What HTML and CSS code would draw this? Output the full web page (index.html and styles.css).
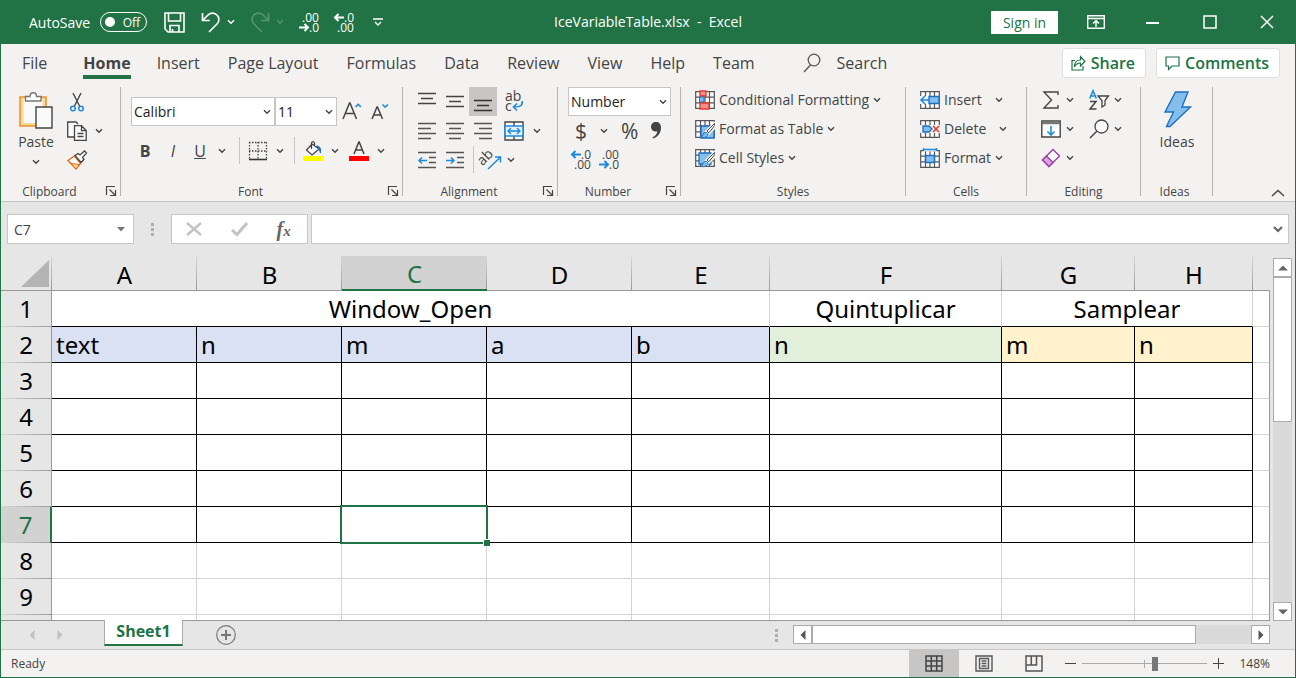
FILE: index.html
```html
<!DOCTYPE html>
<html lang="en">

<head>
    <meta charset="utf-8">
    <title>IceVariableTable.xlsx - Excel</title>

    <link rel="stylesheet" href="styles.css">
</head>

<body>

    <!-- Shared icons -->
    <svg class="defs" width="0" height="0">
        <symbol id="chev" viewBox="0 0 8 6"><path d="M1 1.2l3 3 3-3" fill="none" stroke="currentColor" stroke-width="1.4" /></symbol>
        <symbol id="launcher" viewBox="0 0 12 12"><path d="M1.5 10V1.5H10M4.500 4.500l5.500 5.500M10.500 5v5.500H5" fill="none" stroke="#444" stroke-width="1.200" /></symbol>
        <symbol id="grid" viewBox="0 0 20 18"><path d="M.7.7h18.600v16.600H.7zM.7 6.200h18.600M.7 11.800h18.600M5.500.7v16.600M10 .7v16.600M14.500.7v16.600" fill="#fff" stroke="#555" stroke-width="1.200" /></symbol>
        <symbol id="brush" viewBox="0 0 20 20">
            <path d="M20 4L11.500 12.500l2 2L20 8z" fill="#f3f2f1" stroke="#f3f2f1" stroke-width="3" />
            <path d="M19.500 4.500l-7.500 7.500 1.800 1.800 6-7.300z" fill="#fff" stroke="#444" />
            <path d="M6 18.500c2-.5 1.500-5 4.500-5 2 0 3 1.500 2 3-1.200 2-4 2.500-6.500 2z" fill="#83beec" stroke="#1e6fbf" />
        </symbol>
    </svg>

    <div class="app">

        <header class="titlebar">
            <div class="quick">
                <label class="autosave">AutoSave
                    <span class="switch"><input type="checkbox"><span>Off</span></span>
                </label>
                <button class="save" aria-label="Save"><svg width="21" height="21" viewBox="0 0 21 21"><path d="M1 1h19v19H4l-3-3zM4.500 1v8h12V1M6 20v-6.500h9V20M8.500 17v3" fill="none" stroke="#fff" stroke-width="1.600" /></svg></button>
                <button class="undo" aria-label="Undo"><svg width="20" height="21" viewBox="0 0 20 21"><path d="M1.500 1v7.500H9M1.500 8.500L7 3c3-3 7-2 9 0s3 6 0 9l-8 8" fill="none" stroke="currentColor" stroke-width="1.700" /></svg><svg class="chev"><use href="#chev" /></svg></button>
                <button class="redo" aria-label="Redo"><svg width="20" height="21" viewBox="0 0 20 21"><path d="M18.500 1v7.500H11M18.500 8.500L13 3c-3-3-7-2-9 0s-3 6 0 9l8 8" fill="none" stroke="currentColor" stroke-width="1.700" /></svg><svg class="chev"><use href="#chev" /></svg></button>
                <button class="dec" aria-label="Decrease Decimal"><svg width="21" height="21" viewBox="0 0 21 21"><path class="arrow" d="M0 15.500h9M5.500 12L9 15.500 5.500 19" /><text x="3" y="10">.00</text><text x="10" y="20">.0</text></svg></button>
                <button class="dec" aria-label="Increase Decimal"><svg width="21" height="21" viewBox="0 0 21 21"><path class="arrow" d="M10 5.500H1M4.500 2L1 5.500 4.500 9" /><text x="10" y="10">.0</text><text x="3" y="20">.00</text></svg></button>
                <button class="customize" aria-label="Customize toolbar"><svg width="10" height="9" viewBox="0 0 10 9"><path d="M0 1h10M2 4l3 3 3-3" fill="none" stroke="#fff" stroke-width="1.400" /></svg></button>
            </div>
            <div class="doc-title">IceVariableTable.xlsx&nbsp; -&nbsp; Excel</div>
            <div class="window-controls">
                <button class="sign-in">Sign in</button>
                <button class="win" aria-label="Ribbon display"><svg width="18" height="14" viewBox="0 0 18 14"><path d="M.7.7h16.600v12.600H.7zM1 3.500h16M9 12V6M6 8.500l3-3 3 3" fill="none" stroke="#fff" stroke-width="1.400" /></svg></button>
                <button class="win" aria-label="Minimize"><svg width="14" height="14"><path d="M0 8h13" stroke="#fff" stroke-width="2" /></svg></button>
                <button class="win" aria-label="Maximize"><svg width="14" height="14"><path d="M1 1h12v12H1z" fill="none" stroke="#fff" stroke-width="1.500" /></svg></button>
                <button class="win" aria-label="Close"><svg width="14" height="14"><path d="M1 1l12 12M13 1L1 13" stroke="#fff" stroke-width="1.500" /></svg></button>
            </div>
        </header>

        <nav class="tabs">
            <a class="file" href="#">File</a>
            <a class="active" href="#">Home</a>
            <a href="#">Insert</a>
            <a href="#">Page Layout</a>
            <a href="#">Formulas</a>
            <a href="#">Data</a>
            <a href="#">Review</a>
            <a href="#">View</a>
            <a href="#">Help</a>
            <a href="#">Team</a>
            <button class="search"><svg width="18" height="20" viewBox="0 0 18 20"><circle cx="11" cy="7" r="5.800" fill="none" stroke="#555" stroke-width="1.300" /><path d="M7.500 12L1 19" stroke="#555" stroke-width="1.300" /></svg>Search</button>
            <div class="share-buttons">
                <button><svg width="15" height="16" viewBox="0 0 15 16"><path d="M4 5.500H1V15h11v-4M3.500 12c0-5 2-7 6-7V1.500L14 6.500 9.500 11V8c-3 0-4.500 1-6 4z" fill="none" stroke="#217346" stroke-width="1.200" /></svg>Share</button>
                <button><svg width="15" height="15" viewBox="0 0 15 15"><path d="M1 1h13v9H7l-3.500 3.500V10H1z" fill="none" stroke="#217346" stroke-width="1.200" /></svg>Comments</button>
            </div>
        </nav>

        <!-- Ribbon -->
        <section class="ribbon">

            <div class="group clipboard">
                <div class="body">
                    <button class="big"><svg width="36" height="39" viewBox="0 0 36 39">
                            <path d="M2 6h26v29H2z" fill="#fbd98f" stroke="#e8912d" stroke-width="1.500" /><path d="M5.500 8h19v24h-19z" fill="#fafafa" />
                            <path d="M7.500 10V5.500H12c0-5 6.500-5 6.500 0H23V10z" fill="#fff" stroke="#777" stroke-width="1.400" />
                            <path d="M18 16h16v21H18z" fill="#fafafa" stroke="#444" stroke-width="1.400" />
                        </svg>Paste<svg class="chev"><use href="#chev" /></svg></button>
                    <div class="rows">
                        <button aria-label="Cut"><svg width="20" height="20" viewBox="0 0 20 20"><path d="M6 1l6.500 13M14 1L7.500 14" fill="none" stroke="#444" stroke-width="1.400" /><circle cx="6" cy="16.500" r="2.300" fill="none" stroke="#1e8bd8" stroke-width="1.500" /><circle cx="14" cy="16.500" r="2.300" fill="none" stroke="#1e8bd8" stroke-width="1.500" /></svg></button>
                        <button aria-label="Copy"><svg width="20" height="20" viewBox="0 0 20 20"><path d="M7 16H.7V1H9l2 2" fill="#fafafa" stroke="#444" stroke-width="1.300" /><path d="M7.500 4.700h7l4.700 4.800v9.800H7.500zM14.500 4.700v5h4.700M10.500 12.500h6M10.500 15.500h6" fill="#fafafa" stroke="#444" stroke-width="1.300" /></svg><svg class="chev"><use href="#chev" /></svg></button>
                        <button aria-label="Format Painter"><svg width="20" height="20" viewBox="0 0 20 20"><path d="M1 10.500L7.500 6l6 7.500L9 19z" fill="#fff" stroke="#e8641b" stroke-width="1.300" /><path d="M4 13.500l8.500 1L9 19z" fill="#fbd98f" stroke="#e8641b" /><path d="M8 5.500l3-2 2 1.500 4.500-4 2 2-4 4.500 1.500 2-3 3z" fill="#fff" stroke="#444" stroke-width="1.300" /></svg></button>
                    </div>
                </div>
                <div class="label">Clipboard</div>
                <button class="launcher" aria-label="Clipboard settings"><svg width="12" height="12"><use href="#launcher" /></svg></button>
            </div>

            <div class="group font">
                <div class="body">
                    <div class="font-row">
                        <span class="combo font-name"><select aria-label="Font"><option>Calibri</option></select><svg class="chev"><use href="#chev" /></svg></span>
                        <span class="combo font-size"><select aria-label="Font size"><option>11</option></select><svg class="chev"><use href="#chev" /></svg></span>
                        <button class="grow" aria-label="Increase Font Size"><svg width="20" height="20" viewBox="0 0 20 20"><path d="M1 17L7.500 1h.5L14.500 17M3.500 11.500H12" fill="none" stroke="#444" stroke-width="1.500" /><path d="M13.500 5l2.700-2.700L19 5" fill="none" stroke="#1e8bd8" stroke-width="1.600" /></svg></button>
                        <button aria-label="Decrease Font Size"><svg width="20" height="20" viewBox="0 0 20 20"><path d="M1 17L6 5h.5L11.500 17M3 13h7" fill="none" stroke="#444" stroke-width="1.500" /><path d="M11.500 2.500l2.700 2.700L17 2.500" fill="none" stroke="#1e8bd8" stroke-width="1.600" /></svg></button>
                    </div>
                    <div class="font-row second">
                        <button class="letter"><b>B</b></button>
                        <button class="letter"><i>I</i></button>
                        <button class="letter under"><u>U</u><svg class="chev"><use href="#chev" /></svg></button>
                        <span class="bar"></span>
                        <button aria-label="Borders"><svg width="20" height="20" viewBox="0 0 20 20"><path d="M1.500 1v17M1 1.500h18M18.500 1v17M10 1v17M1 10h18" fill="none" stroke="#444" stroke-width="1.300" stroke-dasharray="1.500 1.500" /><path d="M1 18.500h18" stroke="#333" stroke-width="1.600" /></svg><svg class="chev"><use href="#chev" /></svg></button>
                        <span class="bar"></span>
                        <button class="fill" aria-label="Fill Color"><svg width="20" height="20" viewBox="0 0 20 20"><path d="M9 3l7 5-7 6-5.500-5zM8.500 8V2.500c0-2.500 3-2.500 3 0V6" fill="#fff" stroke="#444" stroke-width="1.300" /><path d="M13.500 5c3.500 0 4.500 2.500 4 7-.8-3-1.500-4.500-4-7z" fill="#1e6fbf" stroke="#1e6fbf" /><path d="M0 15h20v5H0z" fill="#ff0" /></svg><svg class="chev"><use href="#chev" /></svg></button>
                        <button aria-label="Font Color"><svg width="20" height="20" viewBox="0 0 20 20"><path d="M5 13L9.800 1h.4L15 13M6.500 9h7" fill="none" stroke="#444" stroke-width="1.500" /><path d="M0 15h20v5H0z" fill="red" /></svg><svg class="chev"><use href="#chev" /></svg></button>
                    </div>
                </div>
                <div class="label">Font</div>
                <button class="launcher" aria-label="Font settings"><svg width="12" height="12"><use href="#launcher" /></svg></button>
            </div>

            <div class="group alignment">
                <div class="body rows">
                    <div class="row">
                        <button class="al" aria-label="Top Align"><svg width="18" height="18"><path d="M0 .5h18M3 5.500h12M0 10.500h18" stroke="#444" stroke-width="1.400" /></svg></button>
                        <button class="al" aria-label="Middle Align"><svg width="18" height="18"><path d="M0 3.500h18M3 8.500h12M0 13.500h18" stroke="#444" stroke-width="1.400" /></svg></button>
                        <button class="al pressed" aria-label="Bottom Align"><svg width="18" height="18"><path d="M0 7.500h18M3 12.500h12M0 17.500h18" stroke="#333" stroke-width="1.400" /></svg></button>
                        <button class="wrap" aria-label="Wrap Text"><svg width="20" height="20" viewBox="0 0 20 20"><text x="1" y="9">ab</text><text x="1" y="19">c</text><path d="M18 9c1 4-1 6-8 6M13 11.500L9.500 15l3.500 3.500" fill="none" stroke="#1e8bd8" stroke-width="1.600" /></svg></button>
                    </div>
                    <div class="row">
                        <button class="al" aria-label="Align Left"><svg width="18" height="18"><path d="M0 1.500h18M0 6.500h13M0 11.500h18M0 16.500h13" stroke="#555" stroke-width="1.400" /></svg></button>
                        <button class="al" aria-label="Center"><svg width="18" height="18"><path d="M0 1.500h18M3 6.500h12M0 11.500h18M3 16.500h12" stroke="#555" stroke-width="1.400" /></svg></button>
                        <button class="al" aria-label="Align Right"><svg width="18" height="18"><path d="M0 1.500h18M5 6.500h13M0 11.500h18M5 16.500h13" stroke="#555" stroke-width="1.400" /></svg></button>
                        <button class="wrap" aria-label="Merge and Center"><svg width="20" height="20" viewBox="0 0 20 20"><path d="M1 1h18v18H1zM10 1v4M10 15v4" fill="#fff" stroke="#444" stroke-width="1.400" /><path d="M1 5h18v10H1z" fill="#e5f1fb" stroke="#1e8bd8" stroke-width="1.500" /><path d="M4 10h12M7 7l-3 3 3 3M13 7l3 3-3 3" fill="none" stroke="#1e8bd8" stroke-width="1.400" /></svg><svg class="chev"><use href="#chev" /></svg></button>
                    </div>
                    <div class="row">
                        <button class="al" aria-label="Decrease Indent"><svg width="18" height="18"><path d="M0 1.500h18M11 6.500h7M11 11.500h7M0 16.500h18" stroke="#555" stroke-width="1.400" /><path d="M9 9.500H1M4 6.500l-3 3 3 3" fill="none" stroke="#1e8bd8" stroke-width="1.500" /></svg></button>
                        <button class="al" aria-label="Increase Indent"><svg width="18" height="18"><path d="M0 1.500h18M11 6.500h7M11 11.500h7M0 16.500h18" stroke="#555" stroke-width="1.400" /><path d="M0 9.500h8M5 6.500l3 3-3 3" fill="none" stroke="#1e8bd8" stroke-width="1.500" /></svg></button>
                        <span class="bar"></span>
                        <button class="orient" aria-label="Orientation"><svg width="20" height="20" viewBox="0 0 20 20"><text x="-2" y="12" transform="rotate(-45 5 10)">ab</text><path d="M7 19L19 7.500M14 7h5.500v5.500" fill="none" stroke="#1e8bd8" stroke-width="1.500" /></svg><svg class="chev"><use href="#chev" /></svg></button>
                    </div>
                </div>
                <div class="label">Alignment</div>
                <button class="launcher" aria-label="Alignment settings"><svg width="12" height="12"><use href="#launcher" /></svg></button>
            </div>

            <div class="group number">
                <div class="body rows">
                    <span class="combo format"><select aria-label="Number format"><option>Number</option></select><svg class="chev"><use href="#chev" /></svg></span>
                    <div class="row symbols">
                        <button>$<svg class="chev"><use href="#chev" /></svg></button>
                        <button>%</button>
                        <button aria-label="Comma Style"><svg width="10" height="17" viewBox="0 0 10 17"><path d="M5 0c3 0 5 2 5 5.500C10 11 7 15 2 16.500l-.5-1.200C4.500 14 6 12 6.300 9.300 3 10.300 0 8.300 0 5c0-3 2-5 5-5z" fill="#444" /></svg></button>
                    </div>
                    <div class="row decimals">
                        <button class="dec" aria-label="Increase Decimal"><svg width="21" height="21" viewBox="0 0 21 21"><path class="arrow" d="M10 5.500H1M4.500 2L1 5.500 4.500 9" /><text x="10" y="10">.0</text><text x="3" y="20">.00</text></svg></button>
                        <button class="dec" aria-label="Decrease Decimal"><svg width="21" height="21" viewBox="0 0 21 21"><path class="arrow" d="M0 15.500h9M5.500 12L9 15.500 5.500 19" /><text x="3" y="10">.00</text><text x="10" y="20">.0</text></svg></button>
                    </div>
                </div>
                <div class="label">Number</div>
                <button class="launcher" aria-label="Number settings"><svg width="12" height="12"><use href="#launcher" /></svg></button>
            </div>

            <div class="group styles">
                <div class="body rows">
                    <button><svg width="20" height="20" viewBox="0 0 20 20"><use href="#grid" y="1" width="20" height="18" /><path d="M5 1h6v5H5zM5 13h9v6H5z" fill="#ff8c8c" stroke="#e03c31" stroke-width="1.300" /><path d="M4.500 7H9v5H4.500z" fill="#83beec" stroke="#1e6fbf" /></svg>Conditional Formatting<svg class="chev"><use href="#chev" /></svg></button>
                    <button><svg width="20" height="20" viewBox="0 0 20 20"><use href="#grid" y="1" width="20" height="18" /><path d="M6 7h13v12H6z" fill="#83beec" stroke="#1e6fbf" stroke-width="1.300" /><use href="#brush" width="20" height="20" /></svg>Format as Table<svg class="chev"><use href="#chev" /></svg></button>
                    <button><svg width="20" height="20" viewBox="0 0 20 20"><use href="#grid" y="1" width="20" height="18" /><path d="M4 5h12v11H4z" fill="#83beec" stroke="#1e6fbf" stroke-width="1.300" /><use href="#brush" width="20" height="20" /></svg>Cell Styles<svg class="chev"><use href="#chev" /></svg></button>
                </div>
                <div class="label">Styles</div>
            </div>

            <div class="group cells">
                <div class="body rows">
                    <button class="wide"><svg width="20" height="20" viewBox="0 0 20 20"><use href="#grid" y="1" width="20" height="18" /><path d="M0 6h10v8H0z" fill="#f3f2f1" /><path d="M9 6.500h10v7H9z" fill="#83beec" stroke="#1e6fbf" stroke-width="1.300" /><path d="M10 10H1M5 6l-4 4 4 4" fill="none" stroke="#1e8bd8" stroke-width="1.500" /></svg>Insert<svg class="chev"><use href="#chev" /></svg></button>
                    <button class="wide"><svg width="20" height="20" viewBox="0 0 20 20"><use href="#grid" y="1" width="20" height="18" /><path d="M0 6h20v8H0z" fill="#f3f2f1" /><path d="M3 7h6l3 3-3 3H3z" fill="#83beec" stroke="#1e6fbf" stroke-width="1.300" /><path d="M13 7l6 6M19 7l-6 6" stroke="#e03c31" stroke-width="1.600" /></svg>Delete<svg class="chev"><use href="#chev" /></svg></button>
                    <button><svg width="20" height="20" viewBox="0 0 20 20"><use href="#grid" y="2" width="20" height="18" /><path d="M5.500 7.500h9v7h-9z" fill="#83beec" stroke="#1e6fbf" stroke-width="1.500" /><path d="M3 0h14v3.500H3z" fill="#f3f2f1" /><path d="M3.500 0v3M16.500 0v3M3.500 1.500h13" stroke="#1e8bd8" stroke-width="1.400" /></svg>Format<svg class="chev"><use href="#chev" /></svg></button>
                </div>
                <div class="label">Cells</div>
            </div>

            <div class="group editing">
                <div class="body rows">
                    <div class="row">
                        <button aria-label="AutoSum"><svg width="20" height="20" viewBox="0 0 20 20"><path d="M17 5V2H3l7.500 8L3 18h14v-3" fill="none" stroke="#444" stroke-width="1.400" /></svg><svg class="chev"><use href="#chev" /></svg></button>
                        <button aria-label="Sort and Filter"><svg width="20" height="20" viewBox="0 0 20 20"><path d="M.7 8.500L4 .8l3.300 7.700M2 6h4" fill="none" stroke="#1e8bd8" stroke-width="1.600" /><path d="M1 11.500h6L1 19h6.500" fill="none" stroke="#444" stroke-width="1.500" /><path d="M9 6h10.500L16 10.500V15l-3 2v-6.500z" fill="#fff" stroke="#444" stroke-width="1.300" /></svg><svg class="chev"><use href="#chev" /></svg></button>
                    </div>
                    <div class="row">
                        <button aria-label="Fill"><svg width="20" height="20" viewBox="0 0 20 20"><path d="M.8 2h18.400v16H.8z" fill="#fff" stroke="#444" stroke-width="1.400" /><path d="M1 4h18" stroke="#777" stroke-width="2.500" /><path d="M10 7v9M6.500 12.500L10 16l3.500-3.500" fill="none" stroke="#1e8bd8" stroke-width="1.600" /></svg><svg class="chev"><use href="#chev" /></svg></button>
                        <button aria-label="Find and Select"><svg width="20" height="20" viewBox="0 0 20 20"><circle cx="12.500" cy="7.500" r="6.500" fill="#fafafa" stroke="#444" stroke-width="1.300" /><path d="M8 12L1 19" stroke="#444" stroke-width="1.400" /></svg><svg class="chev"><use href="#chev" /></svg></button>
                    </div>
                    <div class="row">
                        <button aria-label="Clear"><svg width="20" height="20" viewBox="0 0 20 20"><path d="M12 1.500L18.500 8 8 18.500 1.500 12z" fill="#fff" stroke="#9b3fa5" stroke-width="1.400" /><path d="M5.500 8L12 14.500l-4 4L1.500 12z" fill="#d8a3df" stroke="#9b3fa5" stroke-width="1.400" /></svg><svg class="chev"><use href="#chev" /></svg></button>
                    </div>
                </div>
                <div class="label">Editing</div>
            </div>

            <div class="group ideas">
                <div class="body">
                    <button class="big"><svg width="30" height="39" viewBox="0 0 30 39"><path d="M13.500 1H26l-6 15h8.500L8 35.500H4.500L11.500 21H3z" fill="#83beec" stroke="#1e6fbf" stroke-width="1.400" /></svg>Ideas</button>
                </div>
                <div class="label">Ideas</div>
            </div>

            <button class="collapse" aria-label="Collapse ribbon"><svg width="14" height="8"><path d="M1 7l6-5.500L13 7" fill="none" stroke="#444" stroke-width="1.400" /></svg></button>
        </section>

        <!-- Formula bar -->
        <section class="formula-bar">
            <div class="name-box"><input type="text" value="C7" aria-label="Name box"><button aria-label="Names"><svg width="8" height="5"><path d="M0 0h8L4 4.500z" fill="#777" /></svg></button></div>
            <span class="dots"></span>
            <div class="fx">
                <button aria-label="Cancel"><svg width="16" height="14"><path d="M1 1l14 12M15 1L1 13" stroke="#c3c3c3" stroke-width="2.400" /></svg></button>
                <button aria-label="Enter"><svg width="17" height="14"><path d="M1 8l5 4.500L16 1" fill="none" stroke="#c3c3c3" stroke-width="3" /></svg></button>
                <button class="fx-letter" aria-label="Insert function"><i>f</i><i class="x">x</i></button>
            </div>
            <div class="formula"><input type="text" aria-label="Formula"><button aria-label="Expand"><svg width="10" height="7"><path d="M1 1l4 4 4-4" fill="none" stroke="#666" stroke-width="2.200" /></svg></button></div>
        </section>

        <!-- Sheet -->
        <main class="sheet-area">
            <div class="sheet">
                <table>
                    <colgroup>
                        <col class="col-head"><col class="col-a"><col class="col-a"><col class="col-a"><col class="col-a"><col class="col-e"><col class="col-f"><col class="col-g"><col class="col-h"><col>
                    </colgroup>
                    <thead>
                        <tr>
                            <th class="corner"></th>
                            <th>A</th><th>B</th><th class="current">C</th><th>D</th><th>E</th><th>F</th><th>G</th><th>H</th><th class="rest"></th>
                        </tr>
                    </thead>
                    <tbody>
                        <tr class="titles">
                            <th>1</th>
                            <td colspan="5">Window_Open</td><td>Quintuplicar</td><td colspan="2">Samplear</td><td></td>
                        </tr>
                        <tr class="boxed">
                            <th>2</th>
                            <td class="blue">text</td><td class="blue">n</td><td class="blue">m</td><td class="blue">a</td><td class="blue">b</td>
                            <td class="green">n</td><td class="yellow">m</td><td class="yellow">n</td><td></td>
                        </tr>
                        <tr class="boxed"><th>3</th><td></td><td></td><td></td><td></td><td></td><td></td><td></td><td></td><td></td></tr>
                        <tr class="boxed"><th>4</th><td></td><td></td><td></td><td></td><td></td><td></td><td></td><td></td><td></td></tr>
                        <tr class="boxed"><th>5</th><td></td><td></td><td></td><td></td><td></td><td></td><td></td><td></td><td></td></tr>
                        <tr class="boxed"><th>6</th><td></td><td></td><td></td><td></td><td></td><td></td><td></td><td></td><td></td></tr>
                        <tr class="boxed"><th class="current">7</th><td></td><td></td><td class="selected"></td><td></td><td></td><td></td><td></td><td></td><td></td></tr>
                        <tr><th>8</th><td></td><td></td><td></td><td></td><td></td><td></td><td></td><td></td><td></td></tr>
                        <tr><th>9</th><td></td><td></td><td></td><td></td><td></td><td></td><td></td><td></td><td></td></tr>
                        <tr><th></th><td></td><td></td><td></td><td></td><td></td><td></td><td></td><td></td><td></td></tr>
                    </tbody>
                </table>
            </div>
            <div class="vscroll">
                <button aria-label="Scroll up"><svg width="10" height="6"><path d="M0 5.500h10L5 .5z" fill="#666" /></svg></button>
                <div class="thumb"></div>
                <button class="end" aria-label="Scroll down"><svg width="10" height="6"><path d="M0 .5h10L5 5.500z" fill="#666" /></svg></button>
            </div>
        </main>

        <section class="sheet-tabs">
            <button class="step" aria-label="Previous sheet"><svg width="6" height="10"><path d="M5.500 0v10L.5 5z" fill="#c0c0c0" /></svg></button>
            <button class="step" aria-label="Next sheet"><svg width="6" height="10"><path d="M.5 0v10l5-5z" fill="#c0c0c0" /></svg></button>
            <a class="sheet-tab" href="#">Sheet1</a>
            <button class="new-sheet" aria-label="New sheet"><svg width="20" height="20"><circle cx="10" cy="10" r="9.300" fill="none" stroke="#777" stroke-width="1.200" /><path d="M10 5v10M5 10h10" stroke="#777" stroke-width="2" /></svg></button>
            <span class="dots"></span>
            <div class="hscroll">
                <button aria-label="Scroll left"><svg width="6" height="10"><path d="M5.500 0v10L.5 5z" fill="#555" /></svg></button>
                <div class="thumb"></div>
                <button class="end" aria-label="Scroll right"><svg width="6" height="10"><path d="M.5 0v10l5-5z" fill="#555" /></svg></button>
            </div>
        </section>

        <footer class="status">
            <span class="ready">Ready</span>
            <button class="view on" aria-label="Normal"><svg width="18" height="17" viewBox="0 0 18 17"><path d="M1 1h16v15H1zM1 6h16M1 11h16M6.300 1v15M11.700 1v15" fill="none" stroke="#444" stroke-width="1.500" /></svg></button>
            <button class="view" aria-label="Page Layout"><svg width="18" height="17" viewBox="0 0 18 17"><path d="M1 1h16v15H1zM4.500 3.500h9v10h-9zM6.500 6h5M6.500 8.500h5M6.500 11h5" fill="none" stroke="#555" stroke-width="1.400" /></svg></button>
            <button class="view" aria-label="Page Break Preview"><svg width="18" height="17" viewBox="0 0 18 17"><path d="M1 1h16v15H1zM1 10h10.500V1M6.300 1v9" fill="none" stroke="#555" stroke-width="1.500" /></svg></button>
            <button class="zoom" aria-label="Zoom out"><svg width="11" height="11"><path d="M0 5.500h11" stroke="#444" /></svg></button>
            <input class="zoom-range" type="range" min="0" max="100" value="59" aria-label="Zoom">
            <button class="zoom" aria-label="Zoom in"><svg width="11" height="11"><path d="M0 5.500h11M5.500 0v11" stroke="#444" /></svg></button>
            <span class="percent">148%</span>
        </footer>

    </div>

</body>

</html>
```

FILE: styles.css
```css
* {
    box-sizing: border-box;
}

body {
    margin: 0;
    font-family: "Open Sans", "Noto Sans", sans-serif;
    font-size: 14px;
    color: #444;
}

button {
    display: flex;
    align-items: center;
    flex: none;
    margin: 0;
    padding: 0;
    border: 0;
    background: none;
    font: inherit;
    color: inherit;
    white-space: nowrap;
}

a {
    color: inherit;
    text-decoration: none;
}

svg {
    display: block;
    flex: none;
    overflow: visible;
}

svg text {
    font-size: 12px;
    fill: currentColor;
}

.defs {
    position: absolute;
}

.chev {
    width: 8px;
    height: 6px;
}

.app {
    display: flex;
    flex-direction: column;
    height: 100vh;
    border: 1px solid #217346;
    border-top: 0;
    background: #f3f2f1;
}

/* Title bar */

.titlebar {
    display: grid;
    grid-template-columns: 1fr auto 1fr;
    align-items: center;
    flex: none;
    height: 44px;
    background: #217346;
    color: white;
}

.quick {
    display: flex;
    align-items: center;
    padding-left: 28px;
}

.autosave {
    display: flex;
    align-items: center;
    gap: 10px;
    margin-right: 17px;
}

.switch {
    display: flex;
    align-items: center;
    justify-content: space-between;
    width: 47px;
    height: 20px;
    padding: 0 6px 0 4px;
    border: 1px solid white;
    border-radius: 10px;
    font-size: 12px;
}

.switch input {
    appearance: none;
    width: 10px;
    height: 10px;
    margin: 0;
    border-radius: 50%;
    background: white;
}

.save {
    margin-right: 16px;
}

.undo,
.redo {
    gap: 6px;
    margin-right: 15px;
}

.redo {
    color: #56936f;
}

.dec {
    margin-right: 14px;
}

.arrow {
    fill: none;
    stroke: currentColor;
    stroke-width: 2px;
}

.customize {
    margin-left: 4px;
}

.doc-title {
    padding-bottom: 2px;
}

.window-controls {
    display: flex;
    align-items: center;
    justify-content: flex-end;
}

.sign-in {
    justify-content: center;
    width: 67px;
    height: 23px;
    margin-right: 9px;
    background: white;
    color: #217346;
}

.win {
    justify-content: center;
    width: 57px;
    height: 44px;
}

/* Tabs */

.tabs {
    display: flex;
    align-items: center;
    gap: 28px;
    flex: none;
    height: 40px;
    padding: 0 15px 2px 21px;
    font-size: 16px;
}

.tabs a {
    line-height: 24px;
    border-bottom: 4px solid transparent;
    margin-top: 4px;
    white-space: nowrap;
}

.tabs .file {
    margin-right: 8px;
}

.tabs .active {
    border-color: #217346;
    font-weight: bold;
    margin-right: -2px;
}

.search {
    gap: 16px;
    margin-left: 20px;
}

.share-buttons {
    display: flex;
    gap: 10px;
    margin-left: auto;
}

.share-buttons button {
    gap: 5px;
    height: 30px;
    padding: 0 10px 0 8px;
    border: 1px solid #e1dfdd;
    border-radius: 3px;
    background: white;
    color: #217346;
    font-weight: 600;
}

/* Ribbon */

.ribbon {
    display: flex;
    position: relative;
    flex: none;
    height: 118px;
    padding: 3px 0 5px;
    border-bottom: 1px solid #c8c6c4;
}

.group {
    display: flex;
    flex-direction: column;
    position: relative;
    flex: none;
    border-right: 1px solid #b5b3b1;
}

.group .body {
    display: flex;
    flex: none;
    height: 87px;
}

.group .label {
    margin-top: 9px;
    line-height: 18px;
    font-size: 12px;
    text-align: center;
}

.launcher {
    position: absolute;
    right: 3px;
    bottom: -1px;
}

.group .rows {
    display: flex;
    flex-direction: column;
}

.rows > * {
    height: 29px;
}

.row {
    display: flex;
    align-items: center;
}

.big {
    flex-direction: column;
    gap: 3px;
    line-height: 18px;
}

.bar {
    flex: none;
    width: 1px;
    height: 27px;
    background: #c8c6c4;
}

.combo {
    position: relative;
    height: 29px;
}

.combo select {
    appearance: none;
    width: 100%;
    height: 100%;
    padding: 0 2px;
    border: 1px solid #c8c6c4;
    border-radius: 0;
    background: white;
    font: inherit;
    color: #222;
}

.combo .chev {
    position: absolute;
    right: 4px;
    top: 12px;
}

.clipboard {
    width: 120px;
}

.clipboard .label {
    padding-right: 22px;
}

.clipboard .big {
    width: 50px;
    margin-left: 10px;
    padding-top: 4px;
}

.clipboard .big .chev {
    margin-top: 5px;
}

.clipboard .rows {
    margin-left: 6px;
}

.clipboard .rows button {
    gap: 8px;
}

.font {
    width: 282px;
}

.font .body {
    flex-direction: column;
    padding: 10px 0 0 10px;
}

.font .label {
    padding-right: 22px;
}

.font-row {
    display: flex;
    align-items: center;
    height: 29px;
}

.font-name {
    width: 144px;
}

.font-size {
    width: 62px;
}

.grow {
    margin: 0 9px 0 5px;
}

.font-row.second {
    margin-top: 10px;
}

.second button {
    gap: 8px;
    margin-right: 10px;
}

.second .letter {
    justify-content: center;
    width: 28px;
    margin: 0;
    font-size: 16px;
}

.second .under {
    width: 46px;
    gap: 12px;
    margin-right: 6px;
}

.second .bar {
    margin-right: 8px;
}

.alignment {
    width: 155px;
}

.alignment .body {
    padding-left: 10px;
}

.alignment .label {
    padding-right: 22px;
}

.al {
    justify-content: center;
    width: 28px;
    height: 29px;
}

.pressed {
    background: #c8c6c4;
}

.wrap,
.orient {
    gap: 9px;
    margin-left: 7px;
}

.alignment .bar {
    margin-left: 4px;
}

.alignment .orient {
    gap: 6px;
}

.alignment .row text {
    font-size: 14px;
}

.number {
    width: 123px;
}

.number .body {
    padding-left: 10px;
}

.number .label {
    padding-right: 22px;
}

.format {
    width: 103px;
}

.symbols {
    gap: 13px;
    padding-left: 7px;
    font-size: 21px;
}

.symbols button {
    gap: 13px;
}

.decimals .dec {
    margin-right: 7px;
}

.decimals .dec:first-child {
    margin-left: 3px;
}

.decimals .arrow {
    stroke: #1e8bd8;
}

.styles {
    width: 225px;
}

.styles .body,
.cells .body {
    padding-left: 14px;
}

.styles .body button,
.cells .body button {
    gap: 4px;
}

.styles .body > *,
.cells .body > *,
.editing .body > * {
    padding-bottom: 4px;
}

.cells {
    width: 121px;
}

.cells .wide .chev {
    margin-left: 9px;
}

.editing {
    width: 114px;
}

.editing .body {
    padding-left: 14px;
}

.editing .row {
    gap: 15px;
}

.editing .row button {
    gap: 5px;
}

.ideas {
    width: 72px;
}

.ideas .big {
    width: 72px;
    padding-top: 4px;
}

.ideas .label {
    padding-right: 4px;
}

.collapse {
    position: absolute;
    right: 10px;
    bottom: 4px;
}

/* Formula bar */

.formula-bar {
    display: flex;
    align-items: flex-start;
    flex: none;
    height: 54px;
    padding: 12px 6px 0;
    background: #e6e6e6;
}

.name-box,
.fx,
.formula {
    display: flex;
    align-items: center;
    height: 30px;
    border: 1px solid #c6c6c6;
    background: white;
}

.name-box input,
.formula input {
    flex: 1;
    min-width: 0;
    padding: 0 6px;
    border: 0;
    background: none;
    font: inherit;
    color: #444;
}

.name-box {
    width: 127px;
    padding-right: 8px;
}

.dots {
    width: 3px;
    height: 13px;
    background: repeating-linear-gradient(#adadad 0 3px, transparent 3px 5px);
}

.formula-bar .dots {
    margin: 9px 17px 0;
}

.fx {
    justify-content: space-around;
    width: 137px;
    margin-right: 3px;
    padding-right: 2px;
}

.fx-letter {
    font: bold 20px "Liberation Serif", serif;
    color: #666;
}

.fx-letter .x {
    font-size: 15px;
    padding-top: 4px;
}

.formula {
    flex: 1;
    padding-right: 5px;
}

/* Sheet */

.sheet-area {
    display: flex;
    flex: 1;
    min-height: 0;
    background: #e6e6e6;
}

.sheet {
    flex: 1;
    min-width: 0;
    overflow: hidden;
    border-bottom: 1px solid #999;
}

table {
    width: 100%;
    table-layout: fixed;
    border-collapse: separate;
    border-spacing: 0;
    background: white;
    font-family: "Noto Sans", "Open Sans", sans-serif;
    font-size: 24px;
    line-height: 34px;
    color: black;
}

.col-head {
    width: 51px;
}

.col-a {
    width: 145px;
}

.col-e {
    width: 138px;
}

.col-f {
    width: 232px;
}

.col-g {
    width: 133px;
}

.col-h {
    width: 118px;
}

th,
td {
    height: 36px;
    padding: 0 4px;
    font-weight: normal;
    text-align: left;
}

thead th {
    height: 35px;
    padding-top: 3px;
    border-bottom: 1px solid #999;
    background: linear-gradient(#d8d8d8, #999) right / 1px 100% no-repeat #e6e6e6;
    line-height: 30px;
    text-align: center;
}

thead .rest {
    background: #e6e6e6;
}

thead .corner {
    padding: 4px 3px 3px 20px;
}

.corner::before {
    content: "";
    display: block;
    height: 27px;
    background: #b4b4b4;
    clip-path: polygon(100% 0, 100% 100%, 0 100%);
}

thead .current {
    border-bottom: 2px solid #217346;
    background-color: #d2d2d2;
    color: #217346;
}

tbody th {
    border-right: 1px solid #999;
    background: linear-gradient(90deg, #d8d8d8, #999) bottom / 100% 1px no-repeat #e6e6e6;
    text-align: center;
}

tbody .current {
    border-right: 2px solid #217346;
    background-color: #d2d2d2;
    color: #217346;
}

td {
    border-right: 1px solid #d4d4d4;
    border-bottom: 1px solid #d4d4d4;
}

td:last-child {
    border-right-color: #999;
}

.titles td {
    text-align: center;
}

.titles td:not(:last-child) {
    border-bottom-color: black;
}

.boxed td:not(:last-child) {
    border-color: black;
}

.blue {
    background: #d9e1f2;
}

.green {
    background: #e2efda;
}

.yellow {
    background: #fff2cc;
}

.selected {
    position: relative;
}

.selected::before {
    content: "";
    position: absolute;
    inset: -2px;
    border: 2px solid #217346;
}

.selected::after {
    content: "";
    position: absolute;
    right: -4px;
    bottom: -4px;
    width: 6px;
    height: 6px;
    border: 1px solid white;
    border-width: 1px 0 0 1px;
    background: #217346;
}

/* Scroll bars */

.vscroll {
    display: flex;
    flex-direction: column;
    width: 19px;
    margin: 2px 3px 0;
    background: #dadada;
}

.vscroll button,
.hscroll button,
.thumb {
    justify-content: center;
    flex: none;
    width: 19px;
    height: 19px;
    border: 1px solid #ababab;
    background: white;
}

.vscroll .thumb {
    height: 40%;
}

.vscroll .end {
    margin-top: auto;
}

.hscroll {
    display: flex;
    width: 477px;
    margin-bottom: 1px;
    background: #dadada;
}

.hscroll .thumb {
    width: 384px;
}

.hscroll .end {
    margin-left: auto;
}

/* Sheet tabs */

.sheet-tabs {
    display: flex;
    align-items: center;
    flex: none;
    height: 28px;
    padding: 0 25px 0 28px;
    background: #e6e6e6;
}

.step {
    margin-right: 22px;
}

.sheet-tab {
    align-self: flex-start;
    position: relative;
    width: 79px;
    margin: -1px 33px 0 19px;
    padding-bottom: 2px;
    border: 1px solid #ababab;
    border-width: 0 1px;
    border-bottom: 2px solid #217346;
    background: white;
    color: #217346;
    font-size: 16px;
    font-weight: bold;
    line-height: 22px;
    text-align: center;
}

.sheet-tabs .dots {
    margin: 0 15px 0 auto;
}

/* Status bar */

.status {
    display: flex;
    align-items: center;
    flex: none;
    height: 28px;
    padding: 0 25px 0 10px;
    border-top: 1px solid #c6c6c6;
    font-size: 12px;
}

.ready {
    margin-right: auto;
}

.view {
    justify-content: center;
    width: 50px;
    height: 27px;
}

.view.on {
    background: #c8c6c4;
}

.zoom {
    margin: 0 6px;
}

.zoom-range {
    appearance: none;
    width: 125px;
    height: 14px;
    margin: 0;
    background:
        linear-gradient(#ababab, #ababab) center / 1px 8px no-repeat,
        linear-gradient(#ababab, #ababab) center / 100% 1px no-repeat;
}

.zoom-range::-webkit-slider-thumb {
    appearance: none;
    width: 6px;
    height: 14px;
    background: #777;
}

.percent {
    width: 31px;
    margin-left: 9px;
    text-align: right;
}
```
